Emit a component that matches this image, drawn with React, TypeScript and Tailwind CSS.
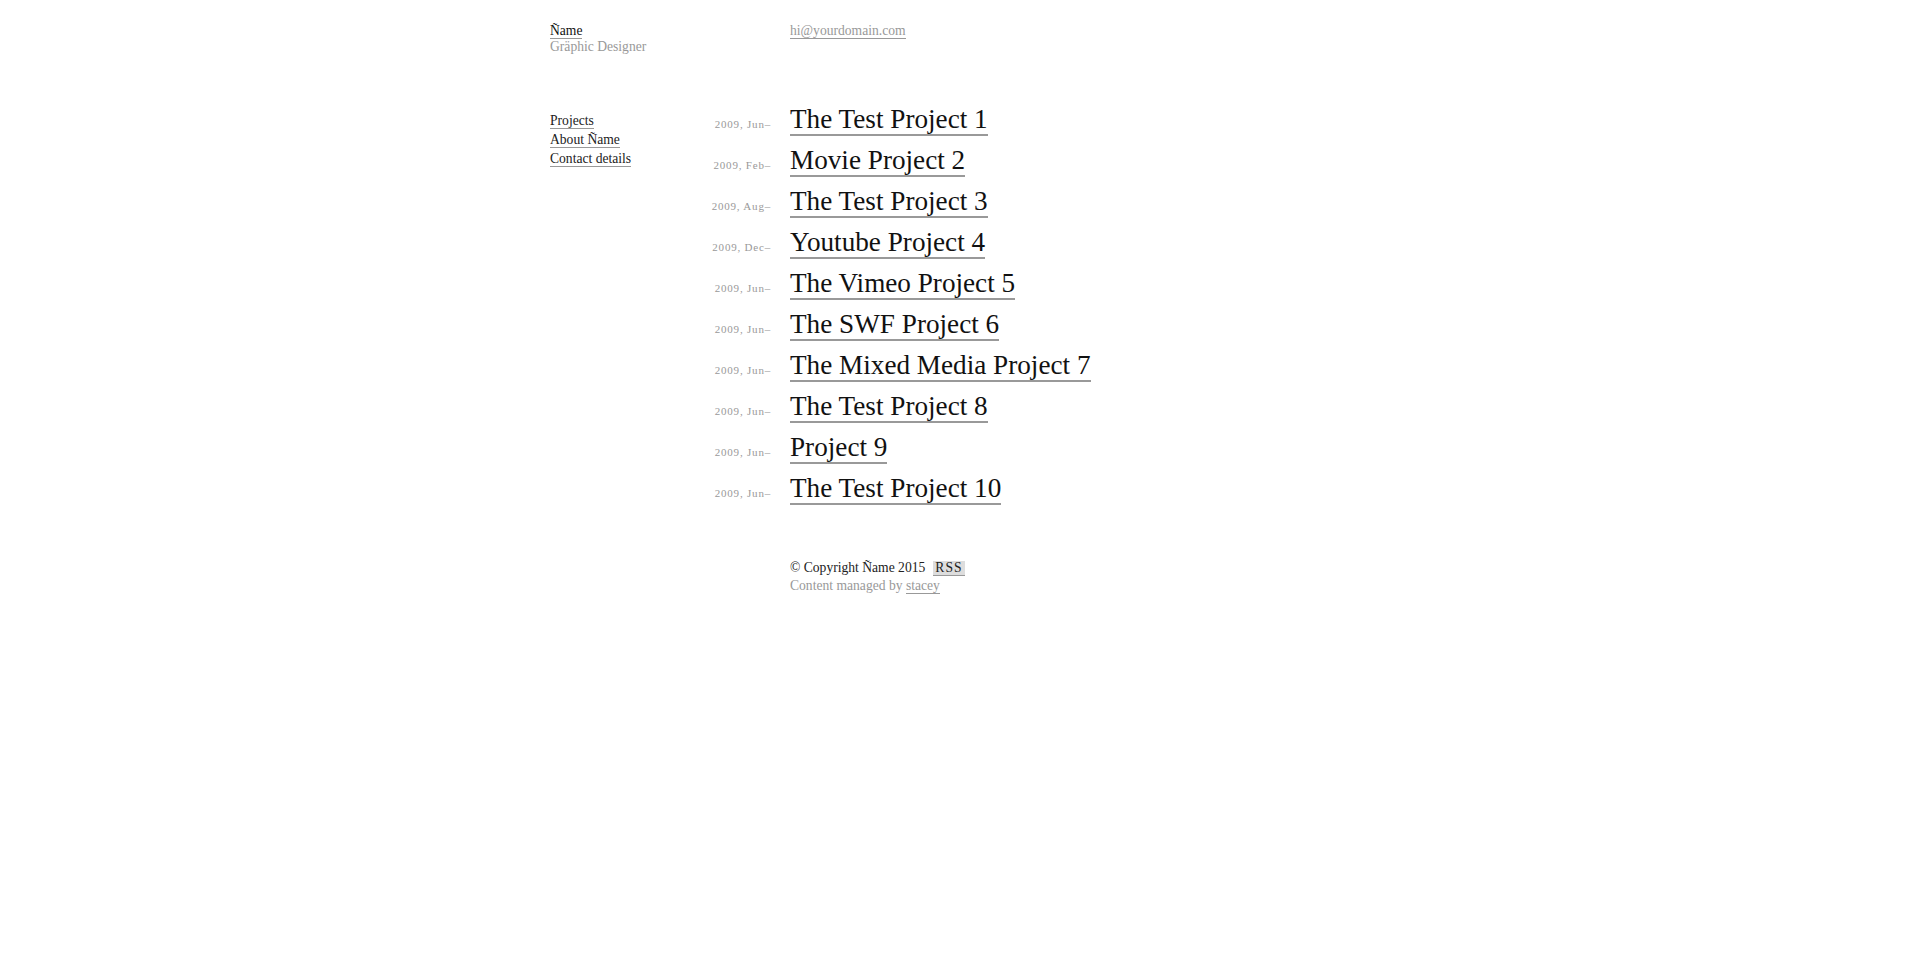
import React from "react";

const projects = [
  ["2009, Jun–", "The Test Project 1"],
  ["2009, Feb–", "Movie Project 2"],
  ["2009, Aug–", "The Test Project 3"],
  ["2009, Dec–", "Youtube Project 4"],
  ["2009, Jun–", "The Vimeo Project 5"],
  ["2009, Jun–", "The SWF Project 6"],
  ["2009, Jun–", "The Mixed Media Project 7"],
  ["2009, Jun–", "The Test Project 8"],
  ["2009, Jun–", "Project 9"],
  ["2009, Jun–", "The Test Project 10"],
];

export default function App() {
  return (
    <div
      className="min-h-[955px] bg-white text-[#222] text-[13.6px]"
      style={{ fontFamily: '"Liberation Serif", "Times New Roman", serif' }}
    >
      <div className="ml-[550px] pt-[23px]">
        <div className="flex leading-[16px]">
          <div className="w-[240px]">
            <div>
              <a className="border-b border-[#999] text-[#111]">Ñame</a>
            </div>
            <div className="text-[#999]">Gräphic Designer</div>
          </div>
          <div>
            <a className="border-b border-[#999] text-[#999]">hi@yourdomain.com</a>
          </div>
        </div>

        <div className="flex mt-[45px]">
          <div className="w-[240px] shrink-0 pt-[11px] leading-[19px]">
            <div>
              <a className="border-b border-[#999]">Projects</a>
            </div>
            <div>
              <a className="border-b border-[#999]">About Ñame</a>
            </div>
            <div>
              <a className="border-b border-[#999]">Contact details</a>
            </div>
          </div>
        </div>
        <div className="-mt-[69px]">
          {projects.map(([d, t], i) => (
            <div key={i} className="flex items-baseline h-[41px] leading-[41px]">
              <div className="w-[240px] shrink-0 pr-[20px] text-right text-[11px] tracking-[0.8px] text-[#999]">
                <span className="-mr-[1px]">{d}</span>
              </div>
              <div className="text-[27.2px] text-[#111] whitespace-nowrap">
                <a className="border-b-2 border-[#999]">{t}</a>
              </div>
            </div>
          ))}
        </div>

        <div className="ml-[240px] mt-[50px] leading-[18px]">
          <div>
            © Copyright Ñame 2015
            <span className="ml-[8px] inline-block bg-[#ddd] border-b border-[#999] px-[2px] leading-[14px] tracking-[1px]">
              RSS
            </span>
          </div>
          <div className="text-[#999]">
            Content managed by <a className="border-b border-[#999]">stacey</a>
          </div>
        </div>
      </div>
    </div>
  );
}
